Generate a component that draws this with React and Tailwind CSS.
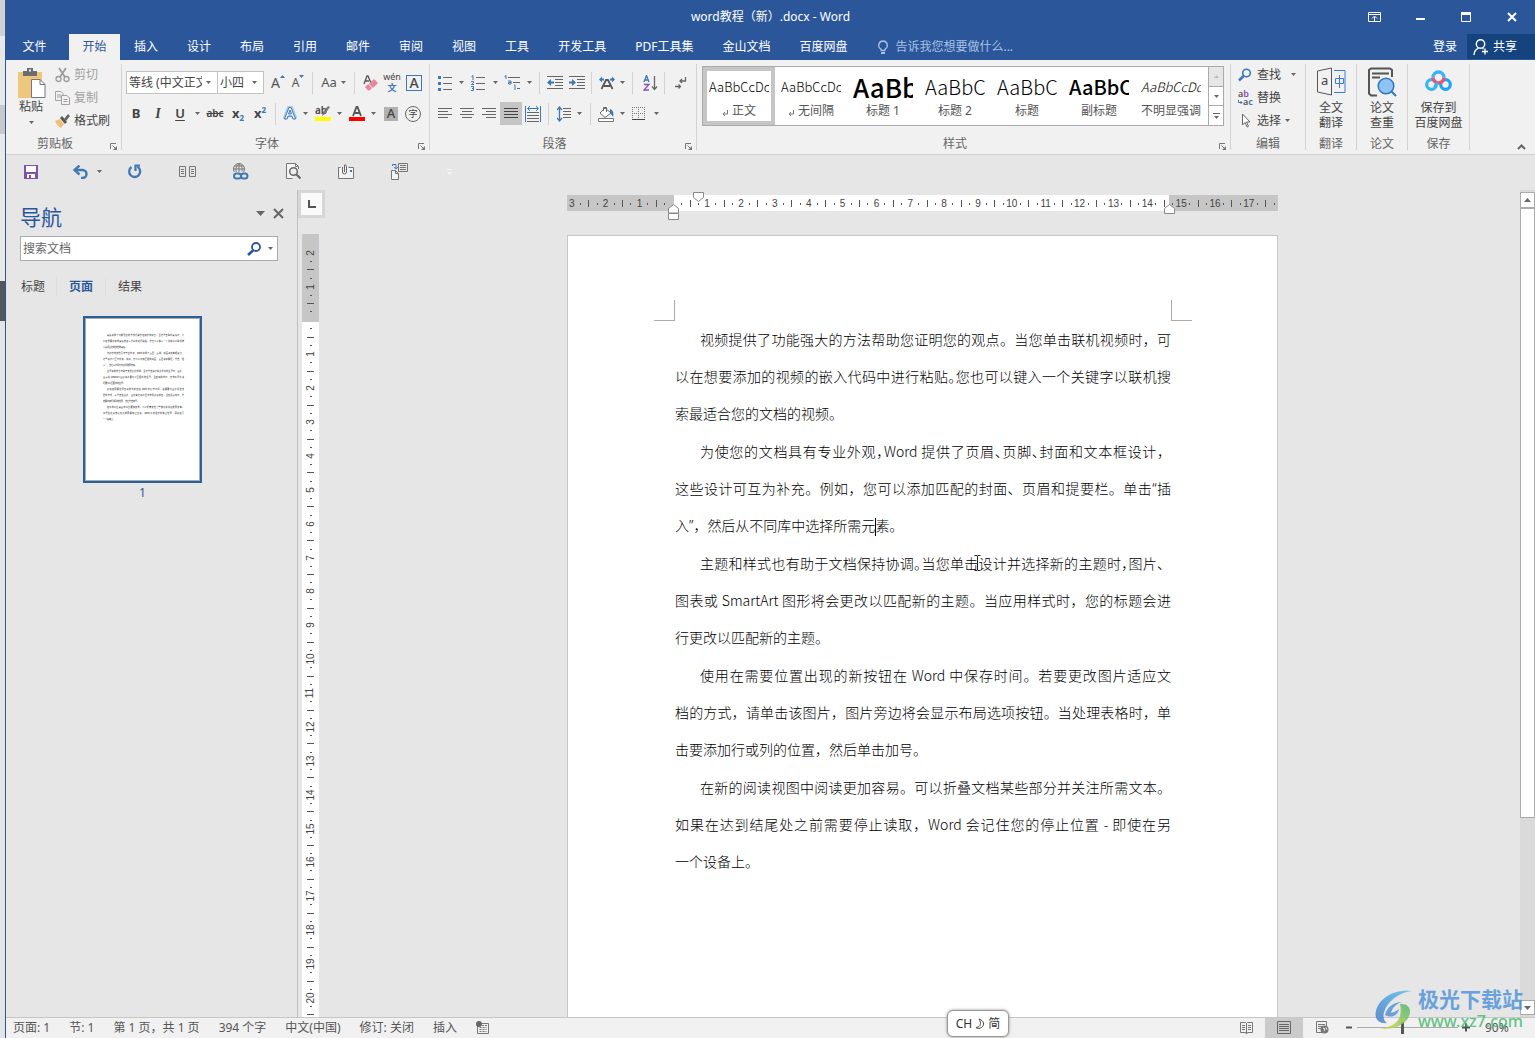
import React from "react";

const UI = "font-['Noto_Sans','Noto_Sans_CJK_SC',sans-serif]";

function Svg({ w = 16, h = 16, children, className = "", label }) {
  return (
    <svg
      width={w}
      height={h}
      viewBox={`0 0 ${w} ${h}`}
      fill="none"
      aria-hidden={label ? undefined : true}
      aria-label={label}
      className={`block shrink-0 ${className}`}
    >
      {children}
    </svg>
  );
}

function Caret({ className = "" }) {
  return (
    <Svg w={5} h={3} className={className}>
      <path d="M0 0h5L2.500 3z" fill="#666" />
    </Svg>
  );
}

function Btn({ w, label, children, className = "" }) {
  return (
    <button
      type="button"
      aria-label={label}
      className={`flex h-[23px] shrink-0 items-center justify-center ${w} ${className}`}
    >
      {children}
    </button>
  );
}

function Drop({ w, label }) {
  return (
    <Btn w={w} label={label}>
      <Caret />
    </Btn>
  );
}

function Sep({ className = "" }) {
  return <span className={`h-[22px] w-px shrink-0 bg-[#d2d2d2] ${className}`} />;
}

function Launcher({ label }) {
  return (
    <button type="button" aria-label={label} className="mb-0.5 self-end">
      <Svg w={7} h={7}>
        <path d="M.5 6V.5H6" stroke="#777" />
        <path d="M2.500 2.500 5 5" stroke="#777" />
        <path d="M7 3v4H3z" fill="#777" />
      </Svg>
    </button>
  );
}

function Group({ name, w, launcher, children }) {
  return (
    <section aria-label={name} className={`flex shrink-0 flex-col ${w}`}>
      <div className="flex h-full">
        <div className="flex min-w-0 flex-1 flex-col">
          <div className="h-[75px]">{children}</div>
          <div className={`flex h-[17px] items-center ${launcher ? "pr-1" : ""}`}>
            <span className={`flex-1 text-center text-xs leading-4 text-[#666] ${launcher ? "pr-1.5" : ""}`}>{name}</span>
            {launcher && <Launcher label={`${name}设置`} />}
          </div>
        </div>
        <span className="my-1 w-px bg-[#d2d2d2]" />
      </div>
    </section>
  );
}

/* ---------- title bar and tabs ---------- */

function TitleBar() {
  const btn = "flex h-[34px] w-[46px] items-center justify-center";
  return (
    <div className="grid h-[34px] grid-cols-[1fr_auto_1fr] items-center text-white">
      <span />
      <h1 className="text-xs">word教程（新）.docx - Word</h1>
      <div className="flex justify-end">
        <button type="button" aria-label="功能区显示选项" className={btn}>
          <Svg w={13} h={10}>
            <path d="M.5.5h12v9H.5zM1 2.500h11" stroke="#fff" />
            <path d="M6.500 9V5M4 6.500 6.500 4 9 6.500" stroke="#fff" />
          </Svg>
        </button>
        <button type="button" aria-label="最小化" className={btn}>
          <Svg w={9} h={10}>
            <path d="M0 6h9v2H0z" fill="#fff" />
          </Svg>
        </button>
        <button type="button" aria-label="最大化" className={btn}>
          <Svg w={10} h={10}>
            <path d="M.5.5h9v9H.5z" stroke="#fff" />
            <path d="M0 0h10v3H0z" fill="#fff" />
          </Svg>
        </button>
        <button type="button" aria-label="关闭" className={btn}>
          <Svg w={10} h={10}>
            <path d="m1 1 8 8M9 1 1 9" stroke="#fff" strokeWidth="2" />
          </Svg>
        </button>
      </div>
    </div>
  );
}

function Tabs() {
  const names = ["插入", "设计", "布局", "引用", "邮件", "审阅", "视图", "工具", "开发工具", "PDF工具集", "金山文档", "百度网盘"];
  return (
    <nav className="flex h-[26px] items-center text-xs text-white">
      <button type="button" className="h-full w-[63px] pr-1.5 text-center">文件</button>
      <button type="button" className="h-full w-[51px] bg-[#f1f1f1] text-[#2b579a]">开始</button>
      <div className="flex gap-px">
        {names.map((n) => (
          <button key={n} type="button" className="h-[26px] shrink-0 px-3.5">{n}</button>
        ))}
      </div>
      <label className="ml-4 flex flex-1 items-center gap-1.5 text-[#a9c1e4]">
        <Svg w={12} h={15}>
          <path d="M6 1a4.300 4.300 0 0 0-2.500 7.800c.5.5.7 1 .7 1.700h3.600c0-.7.2-1.200.7-1.700A4.300 4.300 0 0 0 6 1z" stroke="#a9c1e4" strokeWidth="1.300" />
          <path d="M4 12h4v2H4z" fill="#a9c1e4" />
        </Svg>
        <input
          aria-label="告诉我您想要做什么"
          placeholder="告诉我您想要做什么..."
          className="w-36 bg-transparent text-xs outline-none placeholder:text-[#a9c1e4]"
        />
      </label>
      <button type="button" className="h-full px-2.5">登录</button>
      <button type="button" className="mb-px flex h-[25px] w-[68px] items-center gap-1 bg-[#14437e] pl-1.5">
        <Svg w={16} h={16}>
          <circle cx="7.500" cy="5" r="4.200" stroke="#fff" strokeWidth="1.400" />
          <path d="M1 16c.2-3.500 2-5.800 4.500-6.800M9.500 9.200l1 .6M12 9.500v6M9 12.500h6" stroke="#fff" strokeWidth="1.400" />
        </Svg>
        共享
      </button>
    </nav>
  );
}

/* ---------- ribbon ---------- */

function ClipboardGroup() {
  const row = "flex h-[23px] items-center gap-1 text-xs";
  return (
    <Group name="剪贴板" w="w-[116px]" launcher>
      <div className="flex pl-2.5 pt-[3px]">
        <button type="button" className="flex w-[30px] flex-col items-center pt-1 text-xs text-[#444]">
          <Svg w={30} h={32}>
            <path d="M2 5h24v26H2z" fill="#eec77e" />
            <path d="M7 4h4V1h6v3h4v5H7z" fill="#6d6d6d" />
            <path d="M13 2.500h2v2h-2z" fill="#f1f1f1" />
            <path d="M15.500 12.500h8.500l5 5v13H15.500z" fill="#fff" stroke="#777" />
            <path d="M24 12.500v5h5" stroke="#777" />
          </Svg>
          <span className="leading-4">粘贴</span>
          <Caret className="mt-1.5" />
        </button>
        <div className="ml-[9px]">
          <button type="button" className={`${row} text-[#a0a0a0]`}>
            <Svg w={15} h={16}>
              <path d="m4 1 6 9M11 1 5 10" stroke="#9a9a9a" strokeWidth="1.800" />
              <circle cx="3.500" cy="12" r="2.500" stroke="#9a9a9a" strokeWidth="1.300" />
              <circle cx="11.500" cy="12" r="2.500" stroke="#9a9a9a" strokeWidth="1.300" />
            </Svg>
            剪切
          </button>
          <button type="button" className={`${row} text-[#a0a0a0]`}>
            <Svg w={15} h={14}>
              <path d="M.5.5H6l2 2v7H.5zM2 4h4M2 6h4" stroke="#a6a0a6" />
              <path d="M6.500 4.500H12l2.500 2.500v6.500h-8z" fill="#f1f1f1" stroke="#a6a0a6" />
              <path d="M8.500 8.500h4M8.500 10.500h4" stroke="#a6a0a6" />
            </Svg>
            复制
          </button>
          <button type="button" className={`${row} text-[#444]`}>
            <Svg w={15} h={14}>
              <path d="M0 7l5-2 4 5-3 4C4 13 1 10 0 7z" fill="#eec077" />
              <path d="m5 4 2-2 5 6-2 2z" fill="#555" />
              <path d="m9 5 4-5 2 2-4 5z" fill="#666" />
            </Svg>
            格式刷
          </button>
        </div>
      </div>
    </Group>
  );
}

function Combo({ id, label, value, w }) {
  return (
    <div className={`flex h-[23px] shrink-0 items-center border border-[#c3c3c3] bg-white pr-1.5 ${w}`}>
      <label htmlFor={id} className="sr-only">{label}</label>
      <select id={id} className="h-5 min-w-0 flex-1 appearance-none overflow-hidden bg-transparent pl-0.5 text-xs text-[#444] outline-none">
        <option>{value}</option>
      </select>
      <Caret className="ml-1" />
    </div>
  );
}

function FontGroup() {
  return (
    <Group name="字体" w="w-[308px]" launcher>
      <div className="flex items-center pl-1 pt-[11px]">
        <Combo id="font" label="字体名称" value="等线 (中文正文)" w="w-[92px]" />
        <Combo id="size" label="字号" value="小四" w="w-[47px] -ml-px" />
        <Btn w="w-5 ml-1" label="增大字号">
          <span className="text-sm text-[#555]">A</span>
          <Svg w={5} h={3} className="mb-3"><path d="M2.500 0 5 3H0z" fill="#3c78b4" /></Svg>
        </Btn>
        <Btn w="w-5" label="减小字号">
          <span className="text-xs text-[#555]">A</span>
          <Svg w={5} h={3} className="mb-3"><path d="M2.500 3 5 0H0z" fill="#3c78b4" /></Svg>
        </Btn>
        <Sep className="mx-1" />
        <Btn w="w-[33px]" label="更改大小写" className="gap-1">
          <span className="text-[13px] text-[#555]">Aa</span>
          <Caret />
        </Btn>
        <Sep className="mx-1" />
        <Btn w="w-[22px]" label="清除所有格式">
          <Svg w={15} h={16}>
            <path d="m1 9 3-8h1l3 7M2 6h4" stroke="#555" strokeWidth="1.300" />
            <path d="m6 9 5-5 4 4-5 5z" fill="#e8879b" />
            <path d="m2 12 3-3 4 4-2.500 2.500H5z" fill="#e8879b" />
          </Svg>
        </Btn>
        <Btn w="w-[22px]" label="拼音指南" className="flex-col">
          <span className="text-[9px] leading-[10px] text-[#444]">wén</span>
          <span className="text-[9px] font-bold leading-[11px] text-[#3c78b4]">文</span>
        </Btn>
        <Btn w="w-[22px]" label="字符边框">
          <span className="flex size-4 items-center justify-center border border-[#3c78b4] text-sm font-medium text-[#444]">A</span>
        </Btn>
      </div>
      <div className="flex items-center pl-[3px] pt-2 text-[#444]">
        <Btn w="w-[22px]" label="加粗"><span className="text-[13px] font-bold">B</span></Btn>
        <Btn w="w-[22px]" label="倾斜"><span className="font-['Liberation_Serif',serif] text-sm font-bold italic">I</span></Btn>
        <Btn w="w-[22px]" label="下划线"><span className="text-[13px] font-semibold underline underline-offset-2">U</span></Btn>
        <Drop w="w-3" label="下划线样式" />
        <Btn w="w-6" label="删除线"><span className="text-[10px] font-semibold line-through">abc</span></Btn>
        <Btn w="w-[22px]" label="下标"><span className="text-[13px] font-bold">x</span><span className="pt-2 text-[8px] font-bold text-[#3c78b4]">2</span></Btn>
        <Btn w="w-[22px]" label="上标"><span className="text-[13px] font-bold">x</span><span className="pb-2 text-[8px] font-bold text-[#3c78b4]">2</span></Btn>
        <Sep className="mx-1" />
        <Btn w="w-5" label="文本效果">
          <Svg w={14} h={15}>
            <path d="M1.500 13 6 1.500h2L12.500 13M3.500 9.500h7" stroke="#a9cbee" strokeWidth="4" />
            <path d="M1.500 13 6 1.500h2L12.500 13H10L9 10H5l-1 3zM5.500 8h3L7 4z" stroke="#3c78b4" fill="#fff" />
          </Svg>
        </Btn>
        <Drop w="w-2.5" label="文本效果选项" />
        <Btn w="w-[22px]" label="突出显示" className="ml-0.5">
          <Svg w={16} h={17}>
            <text x="0" y="9" fontSize="10" fontWeight="600" fill="#444" fontFamily="Noto Sans">ab</text>
            <path d="m15 2-5 7-3 2 1-4 5-6z" fill="#777" />
            <path d="M0 12h16v4H0z" fill="#ff0" />
          </Svg>
        </Btn>
        <Drop w="w-2.5" label="突出显示颜色" />
        <Btn w="w-[22px]" label="字体颜色" className="ml-0.5">
          <Svg w={16} h={17}>
            <path d="M4 11 7.500 2h1L12 11M5.500 8h5" stroke="#555" strokeWidth="1.800" />
            <path d="M0 12h16v4H0z" fill="#f00" />
          </Svg>
        </Btn>
        <Drop w="w-2.5" label="字体颜色选项" />
        <Btn w="w-[22px]" label="字符底纹" className="ml-0.5">
          <span className="flex h-3.5 w-3.5 items-center justify-center bg-[#b0b0b0] text-[13px] font-medium">A</span>
        </Btn>
        <Btn w="w-[22px]" label="带圈字符">
          <span className="flex size-4 items-center justify-center rounded-full border border-[#666] text-[9px]">字</span>
        </Btn>
      </div>
    </Group>
  );
}

function Lines({ xs, color = "#666" }) {
  return xs.map(([x1, x2, y], i) => <path key={i} d={`M${x1} ${y}.5H${x2}`} stroke={color} />);
}

function ParagraphGroup() {
  const blue = "#3c78b4";
  return (
    <Group name="段落" w="w-[267px]" launcher>
      <div className="flex items-center pl-1 pt-[11px]">
        <Btn w="w-[22px]" label="项目符号">
          <Svg w={14} h={16}>
            <path d="M0 1h3v3H0zM0 7h3v3H0zM0 13h3v3H0z" fill={blue} />
            <Lines xs={[[5, 14, 2], [5, 14, 8], [5, 14, 14]]} />
          </Svg>
        </Btn>
        <Drop w="w-2.5" label="项目符号库" />
        <Btn w="w-6" label="编号">
          <Svg w={14} h={16}>
            <path d="M.5 1.500 2 .5V5M0 6.500h2.500V8L.5 9.500H3M0 11.500h2.500v4H0M1 13.500h2" stroke={blue} />
            <Lines xs={[[5, 14, 2], [5, 14, 8], [5, 14, 14]]} />
          </Svg>
        </Btn>
        <Drop w="w-2.5" label="编号库" />
        <Btn w="w-6" label="多级列表">
          <Svg w={16} h={16}>
            <path d="M.5 1.500 2 .5V4M4 6h3v3H4.500V7.500H7M10 10h1v5" stroke={blue} />
            <Lines xs={[[4, 16, 2], [9, 16, 7], [13, 16, 13]]} />
          </Svg>
        </Btn>
        <Drop w="w-2.5" label="多级列表库" />
        <Sep className="ml-[5px] mr-1" />
        <Btn w="w-[22px]" label="减少缩进量">
          <Svg w={16} h={14}>
            <Lines xs={[[0, 16, 0], [8, 16, 3], [8, 16, 6], [8, 16, 9], [0, 16, 12]]} />
            <path d="M0 6.500 4 3v2.500h3v2H4V10z" fill={blue} />
          </Svg>
        </Btn>
        <Btn w="w-[22px]" label="增加缩进量">
          <Svg w={16} h={14}>
            <Lines xs={[[0, 16, 0], [8, 16, 3], [8, 16, 6], [8, 16, 9], [0, 16, 12]]} />
            <path d="M7 6.500 3 3v2.500H0v2h3V10z" fill={blue} />
          </Svg>
        </Btn>
        <Sep className="ml-[3px] mr-1" />
        <Btn w="w-[22px]" label="中文版式">
          <Svg w={16} h={14}>
            <path d="M0 3.500 3 .5v2h2v2H3v2zM16 3.500l-3-3v2h-2v2h2v2z" fill={blue} />
            <path d="m2.500 13 4.500-9h2l4.500 9M5 10h6" stroke="#555" strokeWidth="1.800" />
          </Svg>
        </Btn>
        <Drop w="w-2" label="中文版式选项" />
        <Sep className="mx-1.5" />
        <Btn w="w-[22px]" label="排序">
          <Svg w={15} h={16}>
            <path d="M1 7 3.500.5 6 7M2 5h3" stroke={blue} strokeWidth="1.300" />
            <path d="M1 9.500h5L1 15h5" stroke="#8a4fae" strokeWidth="1.300" />
            <path d="M11.500 1v13M9 11.500l2.500 3 2.500-3" stroke="#666" strokeWidth="1.300" />
          </Svg>
        </Btn>
        <Sep className="ml-[3px] mr-1" />
        <Btn w="w-6" label="显示编辑标记">
          <Svg w={12} h={14}>
            <path d="M10.500 1v4H5M7 3 5 5l2 2M0 10.500h5M3.500 8.500l2 2-2 2" stroke="#666" strokeWidth="1.300" />
          </Svg>
        </Btn>
      </div>
      <div className="flex items-center pl-1 pt-2">
        <Btn w="w-[22px]" label="左对齐">
          <Svg w={14} h={11}><Lines xs={[[0, 14, 0], [0, 10, 3], [0, 14, 6], [0, 10, 9]]} /></Svg>
        </Btn>
        <Btn w="w-[22px]" label="居中">
          <Svg w={14} h={11}><Lines xs={[[0, 14, 0], [2, 12, 3], [0, 14, 6], [2, 12, 9]]} /></Svg>
        </Btn>
        <Btn w="w-[22px]" label="右对齐">
          <Svg w={14} h={11}><Lines xs={[[0, 14, 0], [4, 14, 3], [0, 14, 6], [4, 14, 9]]} /></Svg>
        </Btn>
        <Btn w="w-[22px]" label="两端对齐" className="bg-[#c5c5c5]">
          <Svg w={14} h={11}><Lines xs={[[0, 14, 0], [0, 14, 3], [0, 14, 6], [0, 14, 9]]} color="#444" /></Svg>
        </Btn>
        <Btn w="w-[22px]" label="分散对齐">
          <Svg w={16} h={16}>
            <path d="M.5 0v16M15.500 0v16M3 2.500h10M5 0 2.500 2.500 5 5M11 0l2.500 2.500L11 5" stroke={blue} />
            <Lines xs={[[2, 14, 6], [2, 14, 9], [2, 14, 12], [2, 14, 15]]} />
          </Svg>
        </Btn>
        <Sep className="ml-1 mr-[5px]" />
        <Btn w="w-5" label="行和段落间距">
          <Svg w={14} h={16}>
            <path d="M2.500 1v14M0 4l2.500-3L5 4M0 12l2.500 3L5 12" stroke={blue} strokeWidth="1.300" />
            <Lines xs={[[6, 14, 2], [6, 14, 5], [6, 14, 8], [6, 14, 11]]} />
          </Svg>
        </Btn>
        <Drop w="w-2.5" label="行距选项" />
        <Sep className="ml-1.5 mr-1" />
        <Btn w="w-[22px]" label="底纹">
          <Svg w={17} h={16}>
            <path d="m2 7 5-5 6 5-6 4.500z" fill="#fff" stroke="#666" />
            <path d="M5.500 5V1.500h3V6" stroke="#666" />
            <path d="M12 3c3 1 4 4 3 8-1-2-2-3-3-4z" fill={blue} />
            <path d="M.5 12.500h15v3H.5z" fill="#fff" stroke="#777" />
          </Svg>
        </Btn>
        <Drop w="w-2.5" label="底纹颜色" />
        <Btn w="w-6" label="边框">
          <Svg w={14} h={13}>
            <path d="M.5 0v12M6.500 0v12M12.500 0v12M0 .5h13M0 6.500h13" stroke="#777" strokeDasharray="1 1" />
            <path d="M0 12.500h13" stroke="#444" />
          </Svg>
        </Btn>
        <Drop w="w-2.5" label="边框选项" />
      </div>
    </Group>
  );
}

const STYLES = [
  { name: "正文", mark: true, text: "AaBbCcDd", cls: "text-[13px] font-light" },
  { name: "无间隔", mark: true, text: "AaBbCcDd", cls: "text-[13px] font-light" },
  { name: "标题 1", text: "AaBb", cls: "text-[26px] font-medium" },
  { name: "标题 2", text: "AaBbCc", cls: "text-xl font-light" },
  { name: "标题", text: "AaBbCc", cls: "text-xl font-light" },
  { name: "副标题", text: "AaBbCc", cls: "text-xl font-medium" },
  { name: "不明显强调", text: "AaBbCcDd", cls: "text-[13px] font-light italic text-[#404040]" },
];

function StylesGroup() {
  const side = "flex flex-1 items-center justify-center border-l border-[#ababab]";
  return (
    <Group name="样式" w="w-[534px]" launcher>
      <div className="pl-[5px] pt-1.5">
        <div className="flex h-[60px] w-[522px] border border-[#ababab] bg-white">
          {STYLES.map((s, i) => (
            <button
              key={s.name}
              type="button"
              className={`flex w-[72px] shrink-0 flex-col ${i === 0 ? "border-4 border-[#c6c6c6] px-0.5" : "px-1.5 py-1"}`}
            >
              <span className={`flex h-8 w-full items-center overflow-hidden whitespace-nowrap font-['Noto_Sans_CJK_SC',sans-serif] leading-8 text-black ${s.cls}`}>
                {s.text}
              </span>
              <span className="flex w-full items-center justify-center gap-1 whitespace-nowrap text-xs leading-4 text-[#555]">
                {s.mark && (
                  <Svg w={6} h={7} className="mt-1">
                    <path d="M5.500 0v4H1M3 2 1 4l2 2" stroke="#777" />
                  </Svg>
                )}
                {s.name}
              </span>
            </button>
          ))}
          <div className="ml-px flex flex-1 flex-col">
            <button type="button" aria-label="上一行" className={`${side} bg-[#e6e6e6]`}>
              <Svg w={5} h={3}><path d="M2.500 0 5 3H0z" fill="#bbb" /></Svg>
            </button>
            <button type="button" aria-label="下一行" className={`${side} border-t`}><Caret /></button>
            <button type="button" aria-label="其他" className={`${side} flex-col gap-0.5 border-t`}>
              <span className="h-px w-[7px] bg-[#666]" />
              <Caret />
            </button>
          </div>
        </div>
      </div>
    </Group>
  );
}

function EditingGroup() {
  const row = "flex h-[23px] items-center gap-1 text-xs text-[#444]";
  return (
    <Group name="编辑" w="w-[75px]">
      <div className="pl-[7px] pt-[3px]">
        <button type="button" className={row}>
          <Svg w={15} h={14}>
            <circle cx="8.500" cy="5" r="3.800" stroke="#3c78b4" strokeWidth="1.600" />
            <path d="M5.500 8 1 12.500" stroke="#3c78b4" strokeWidth="2.500" />
          </Svg>
          查找
          <Caret className="ml-1.5" />
        </button>
        <button type="button" className={row}>
          <Svg w={16} h={16}>
            <text x="0" y="7" fontSize="9" fontWeight="600" fontFamily="Noto Sans" fill="#555">a<tspan fill="#8a4fae">b</tspan></text>
            <text x="5" y="15" fontSize="9" fontWeight="600" fontFamily="Noto Sans" fill="#555">a<tspan fill="#3c78b4">c</tspan></text>
            <path d="M.5 10v2.500H4M2.500 11 4 12.500 2.500 14" stroke="#3c78b4" />
          </Svg>
          <span className="-ml-px">替换</span>
        </button>
        <button type="button" className={row}>
          <Svg w={15} h={15}>
            <path d="M4.500 1v11l2.500-2.500 2 4.500 1.500-.7L8.500 9H12z" stroke="#666" fill="#fff" />
          </Svg>
          选择
          <Caret />
        </button>
      </div>
    </Group>
  );
}

function BigGroup({ name, w, icon, lines }) {
  return (
    <Group name={name} w={w}>
      <button type="button" className="flex w-full flex-col items-center pt-[7px] text-xs leading-[15px] text-[#444]">
        <span className="mb-0.5 flex h-[31px] items-start">{icon}</span>
        {lines.map((l) => <span key={l} className="whitespace-nowrap">{l}</span>)}
      </button>
    </Group>
  );
}

const translateIcon = (
  <Svg w={29} h={30}>
    <path d="M.5 4 14.500 1v27L.5 25z" stroke="#555" />
    <text x="4" y="18" fontSize="13" fontFamily="Noto Sans" fill="#444">a</text>
    <path d="M17 3.500h11v22H17" stroke="#3f7bd0" />
    <path d="M18.500 11.500h8v5h-8zM22.500 8v13" stroke="#3f7bd0" />
  </Svg>
);
const paperIcon = (
  <Svg w={29} h={30}>
    <path d="M9 28.500H3l-2-2V3l2-1.500h19L24 3v7" stroke="#555" strokeWidth="2" />
    <path d="M4 6.500h17M4 10.500h8" stroke="#555" strokeWidth="2" />
    <circle cx="18" cy="19" r="7.800" fill="#8fc3f8" stroke="#2f78b8" strokeWidth="1.500" />
    <path d="m23 24 5 5" stroke="#2f78b8" strokeWidth="2" />
  </Svg>
);
const cloudIcon = (
  <Svg w={27} h={25} className="mt-0.5">
    <circle cx="6.500" cy="15.500" r="4.800" stroke="#35b5f5" strokeWidth="3.200" />
    <circle cx="20.500" cy="15.500" r="4.800" stroke="#1ba4f5" strokeWidth="3.200" />
    <path d="M8 8.500a5.500 5.500 0 0 1 11 0" stroke="#35b5f5" strokeWidth="3.400" />
    <path d="M8 8.500a5.500 5.500 0 0 0 11 0" stroke="#f0506e" strokeWidth="3.400" />
    <path d="m9.500 18 3-4.500" stroke="#35b5f5" strokeWidth="3" />
  </Svg>
);

function Ribbon() {
  return (
    <div className="flex h-[95px] overflow-hidden border-b border-[#d2d2d2] bg-[#f1f1f1]">
      <ClipboardGroup />
      <FontGroup />
      <ParagraphGroup />
      <StylesGroup />
      <EditingGroup />
      <BigGroup name="翻译" w="w-[51px]" icon={translateIcon} lines={["全文", "翻译"]} />
      <BigGroup name="论文" w="w-[51px]" icon={paperIcon} lines={["论文", "查重"]} />
      <BigGroup name="保存" w="w-[62px]" icon={cloudIcon} lines={["保存到", "百度网盘"]} />
      <div className="flex flex-1 items-end justify-end pb-1 pr-[9px]">
        <button type="button" aria-label="折叠功能区">
          <Svg w={9} h={7}><path d="m1 6 3.500-3.500L8 6" stroke="#666" strokeWidth="2" /></Svg>
        </button>
      </div>
    </div>
  );
}

function QuickAccess() {
  const wide = "w-[53px]";
  return (
    <div className="flex h-[35px] items-center bg-[#e6e6e6] pb-0.5">
      <Btn w="w-[50px]" label="保存">
        <Svg w={14} h={14}>
          <path d="M0 0h14v14H0z" fill="#8250aa" />
          <path d="M2 1h10v6H2zM3 9h8v4H3z" fill="#fff" />
          <path d="M5 10h2v3H5z" fill="#8250aa" />
        </Svg>
      </Btn>
      <Btn w="w-5 ml-[15px]" label="撤消">
        <Svg w={16} h={14}>
          <path d="M2 5h7.500a4 4 0 0 1 0 8H8" stroke="#3f78b5" strokeWidth="2.400" />
          <path d="M6.500.5 1.500 5l5 4.500" stroke="#3f78b5" strokeWidth="2.400" />
        </Svg>
      </Btn>
      <Drop w="w-[17px]" label="撤消列表" />
      <Btn w={wide} label="恢复">
        <Svg w={15} h={15}>
          <path d="M4.500 3A5.500 5.500 0 1 0 10.500 2.800" stroke="#3f78b5" strokeWidth="2.300" />
          <path d="M8.500 7V1.500H13" stroke="#3f78b5" strokeWidth="2.200" />
        </Svg>
      </Btn>
      <Btn w={wide} label="阅读视图">
        <Svg w={17} h={12}>
          <path d="M.5.5h6v10h-6zM10.500.5h6v10h-6zM2 3.500h3M2 5.500h3M2 7.500h3M12 3.500h3M12 5.500h3M12 7.500h3" stroke="#777" />
        </Svg>
      </Btn>
      <Btn w={wide} label="超链接">
        <Svg w={17} h={17}>
          <circle cx="7" cy="6" r="5.500" stroke="#777" />
          <path d="M1.500 6h11M7 .5v9M2.500 3h9M4.500 10C3.500 7 3.500 3.500 7 .5c3.500 3 3.500 5 3 8" stroke="#777" />
          <path d="M1 9h15v8H1z" fill="#e6e6e6" />
          <rect x="2" y="10.500" width="7" height="5" rx="2.500" stroke="#3f78b5" strokeWidth="2" />
          <rect x="9" y="10.500" width="6.500" height="5" rx="2.500" stroke="#3f78b5" strokeWidth="2" />
        </Svg>
      </Btn>
      <Btn w={wide} label="打印预览">
        <Svg w={15} h={17}>
          <path d="M12.500 6V3.500L9.500.5h-9v15h6M9.500.5v3h3" fill="#f4f4f4" stroke="#777" />
          <circle cx="7.500" cy="8.500" r="3.800" stroke="#666" strokeWidth="1.500" fill="#eee" />
          <path d="m10.500 11.500 4 4" stroke="#666" strokeWidth="2.200" />
        </Svg>
      </Btn>
      <Btn w={wide} label="附件">
        <Svg w={17} h={16}>
          <path d="M2.500 3.500H.5v11h15v-11h-5" fill="#f4f4f4" stroke="#777" />
          <path d="M4.500 3v5a2 2 0 0 0 4 0V2.500a1.500 1.500 0 0 0-2-1.500v7" stroke="#666" />
          <path d="M12 6h2v2h-2z" fill="#3f78b5" />
        </Svg>
      </Btn>
      <Btn w={wide} label="发送">
        <Svg w={17} h={17}>
          <path d="M7.500.5h9v8h-9zM9 2.500h6M9 4.500h6M9 6.500h6" stroke="#777" />
          <path d="M.5 7.500h4l3 3v6h-7zM4.500 7.500v3h3" fill="#f4f4f4" stroke="#777" />
          <path d="M1.500 3V1.500h3.500V5.500M3 4l2 2 2-2" stroke="#3f78b5" />
        </Svg>
      </Btn>
      <Btn w="w-[46px]" label="自定义快速访问工具栏">
        <Svg w={5} h={6}>
          <path d="M0 .5h5" stroke="#f6f6f6" />
          <path d="M0 3h5L2.500 6z" fill="#f6f6f6" />
        </Svg>
      </Btn>
    </div>
  );
}

/* ---------- document text ---------- */

const DOC = [
  [
    "视频提供了功能强大的方法帮助您证明您的观点。当您单击联机视频时，可",
    "以在想要添加的视频的嵌入代码中进行粘贴。您也可以键入一个关键字以联机搜",
    "索最适合您的文档的视频。",
  ],
  [
    "为使您的文档具有专业外观，Word 提供了页眉、页脚、封面和文本框设计，",
    "这些设计可互为补充。例如，您可以添加匹配的封面、页眉和提要栏。单击“插",
    "入”，然后从不同库中选择所需元|素。",
  ],
  [
    "主题和样式也有助于文档保持协调。当您单击^设计并选择新的主题时，图片、",
    "图表或 SmartArt 图形将会更改以匹配新的主题。当应用样式时，您的标题会进",
    "行更改以匹配新的主题。",
  ],
  [
    "使用在需要位置出现的新按钮在 Word 中保存时间。若要更改图片适应文",
    "档的方式，请单击该图片，图片旁边将会显示布局选项按钮。当处理表格时，单",
    "击要添加行或列的位置，然后单击加号。",
  ],
  [
    "在新的阅读视图中阅读更加容易。可以折叠文档某些部分并关注所需文本。",
    "如果在达到结尾处之前需要停止读取，Word 会记住您的停止位置 - 即使在另",
    "一个设备上。",
  ],
];

/* lines whose inner punctuation is set half-width so that they fit the measure */
const TIGHT = new Set(["0-1", "1-0", "2-0"]);

function DocLine({ text, tight }) {
  return text.split(/([|^“”]|[，。、](?=.))/).map((part, i) => {
    if (part === "|") {
      return <span key={i} className="-mr-px inline-block h-[18px] w-px bg-black align-middle" />;
    }
    if (part === "^") {
      return (
        <span key={i} className="relative">
          <Svg w={7} h={16} className="absolute -left-1 top-0.5">
            <path d="M.5.5H3l.5.5.5-.5h2.500M3.500 1v14M.5 15.500H3l.5-.5.5.5h2.500" stroke="#222" />
          </Svg>
        </span>
      );
    }
    if (part === "“" || part === "”") {
      return <span key={i} className="font-['Noto_Sans',sans-serif]">{part}</span>;
    }
    if (tight && /^[，。、]$/.test(part)) {
      return <span key={i} className="[font-feature-settings:'halt']">{part}</span>;
    }
    return part;
  });
}

function DocumentText() {
  return DOC.map((lines, p) => (
    <p key={p} className="mb-px">
      {lines.map((line, i) => (
        <span
          key={i}
          className={[
            "block whitespace-nowrap",
            i === 0 ? "pl-[25px]" : "",
            i < lines.length - 1 ? "[text-align-last:justify]" : "",
          ].join(" ")}
        >
          <DocLine text={line} tight={TIGHT.has(`${p}-${i}`)} />
        </span>
      ))}
    </p>
  ));
}

/* ---------- navigation pane ---------- */

function NavPane() {
  return (
    <aside className="flex w-[292px] shrink-0 flex-col border-r border-[#bfbfbf] pl-3.5 pr-[19px]">
      <div className="flex h-[46px] items-center">
        <h2 className="flex-1 pt-2 text-[21px] leading-8 text-[#2b579a]">导航</h2>
        <button type="button" aria-label="任务窗格选项" className="mr-2">
          <Svg w={9} h={5}><path d="M0 0h9L4.500 5z" fill="#666" /></Svg>
        </button>
        <button type="button" aria-label="关闭导航" className="-mr-1.5">
          <Svg w={11} h={11}><path d="m1 1 9 9M10 1l-9 9" stroke="#666" strokeWidth="2" /></Svg>
        </button>
      </div>
      <div className="flex h-[25px] items-center border border-[#ababab] bg-white pr-1">
        <input aria-label="搜索文档" placeholder="搜索文档" className="min-w-0 flex-1 bg-transparent pl-0.5 text-xs outline-none placeholder:text-[#666]" />
        <button type="button" aria-label="搜索">
          <Svg w={15} h={14}>
            <circle cx="9" cy="5" r="4" stroke="#2b579a" strokeWidth="1.800" />
            <path d="M6 8.500 1 13" stroke="#2b579a" strokeWidth="2.600" />
          </Svg>
        </button>
        <button type="button" aria-label="搜索选项" className="ml-1.5"><Caret /></button>
      </div>
      <div className="mt-4 flex h-5 items-center text-xs text-[#444]">
        <button type="button" className="pl-px pr-[11px]">标题</button>
        <span className="h-5 w-px bg-[#dedede]" />
        <button type="button" className="px-3 font-bold text-[#2b579a]">页面</button>
        <span className="h-5 w-px bg-[#dedede]" />
        <button type="button" className="px-3">结果</button>
      </div>
      <button type="button" aria-label="第 1 页" className="ml-[63px] mt-[19px] flex w-[119px] flex-col items-center text-[#2b579a]">
        <span className="block h-[167px] w-full border-2 border-[#2a6099] bg-white">
          <span className="block h-full border border-[#ababab] pl-[17px] pr-[15px] pt-3.5">
            {DOC.map((lines, p) => (
              <span key={p} className="block font-['Noto_Sans_CJK_SC',sans-serif] text-[2px] leading-[6px] text-black">
                {lines.map((l, i) => (
                  <span
                    key={i}
                    className={`block whitespace-nowrap text-left ${i === 0 ? "pl-1" : ""} ${i < 2 ? "[text-align-last:justify]" : ""}`}
                  >
                    {l.replace(/[|^]/, "")}
                  </span>
                ))}
              </span>
            ))}
          </span>
        </span>
        <span className="mt-0.5 text-xs leading-4">1</span>
      </button>
    </aside>
  );
}

/* ---------- rulers ---------- */

const H_MARKS = [3, 2, 1, "", 1, 2, 3, 4, 5, 6, 7, 8, 9, 10, 11, 12, 13, 14, 15, 16, 17, 18];
const V_MARKS = [2, 1, "", 1, 2, 3, 4, 5, 6, 7, 8, 9, 10, 11, 12, 13, 14, 15, 16, 17, 18, 19, 20];

function HRuler() {
  return (
    <div className="relative h-4">
      <div className="h-4 overflow-hidden bg-[linear-gradient(to_right,#c6c6c6_107px,#fff_107px,#fff_602px,#c6c6c6_602px)]">
        <div className="-ml-2 flex h-4 w-[745px] pt-px font-['Liberation_Sans',sans-serif] text-[10px] leading-none text-[#444]">
          {H_MARKS.map((n, i) => (
            <span key={i} className="grid flex-1 grid-cols-4 items-center justify-items-center">
              <span className="h-0.5 w-px bg-[#555]" />
              <span className="flex w-0 justify-center">{n}</span>
              <span className="h-0.5 w-px bg-[#555]" />
              <span className="h-[7px] w-px bg-[#555]" />
            </span>
          ))}
        </div>
      </div>
      <Svg w={11} h={16} className="absolute left-[101px] top-[9px]">
        <path d="M.5 9V4.500L5.500.5l5 4V9zM.5 9.500h10v6H.5z" fill="#fff" stroke="#888" />
      </Svg>
      <Svg w={11} h={10} className="absolute -top-[3px] left-[126px]">
        <path d="M.5.5h10v5l-5 4-5-4z" fill="#fff" stroke="#888" />
      </Svg>
      <Svg w={11} h={10} className="absolute left-[597px] top-[9px]">
        <path d="M.5 9.500v-5L5.500.5l5 4v5z" fill="#fff" stroke="#888" />
      </Svg>
    </div>
  );
}

function VRuler() {
  return (
    <div className="ml-1 mt-4 flex min-h-0 w-[17px] flex-1 flex-col overflow-hidden bg-[linear-gradient(to_bottom,#c6c6c6_88px,#fff_88px)] pt-1.5">
      <div className="-mb-0.5 flex min-h-0 flex-1 flex-col font-['Liberation_Sans',sans-serif] text-[10px] leading-none text-[#444]">
        {V_MARKS.map((n, i) => (
          <span key={i} className="grid min-h-0 flex-1 grid-rows-4 items-center justify-items-center">
            <span className={`h-px w-0.5 ${i === 0 ? "" : "bg-[#555]"}`} />
            <span className="flex h-0 -rotate-90 items-center">{n}</span>
            <span className="h-px w-0.5 bg-[#555]" />
            <span className="h-px w-[7px] bg-[#555]" />
          </span>
        ))}
      </div>
    </div>
  );
}

function Workspace() {
  return (
    <main className="flex min-h-0 flex-1 bg-[#e6e6e6]">
      <NavPane />
      <div className="flex w-[27px] shrink-0 flex-col">
        <button type="button" aria-label="制表符" className="flex h-7 shrink-0 items-center justify-center border-[3px] border-[#d6d6d6] bg-[#fafafa]">
          <Svg w={8} h={8}><path d="M1 0v7h7" stroke="#555" strokeWidth="2" /></Svg>
        </button>
        <VRuler />
      </div>
      <div className="flex min-w-0 flex-1 flex-col items-center overflow-hidden pt-[5px]">
        <div className="flex min-h-0 w-[711px] flex-1 flex-col">
          <HRuler />
          <article className="mt-6 min-h-0 flex-1 overflow-hidden border border-b-0 border-[#c6c6c6] bg-white pt-16 font-['Noto_Sans_CJK_SC',sans-serif] text-sm font-light leading-[37px] text-black">
            <div className="flex justify-between pl-[86px] pr-[85px]">
              <span className="size-[21px] border-b border-r border-[#ababab]" />
              <span className="size-[21px] border-b border-l border-[#ababab]" />
            </div>
            <div className="pl-[107px] pr-[106px]">
              <DocumentText />
            </div>
          </article>
        </div>
      </div>
      <div className="flex w-[15px] shrink-0 flex-col bg-[#dadada] pt-0.5">
        <button type="button" aria-label="向上滚动" className="flex h-4 items-center justify-center border border-[#ababab] bg-white">
          <Svg w={7} h={4}><path d="M3.500 0 7 4H0z" fill="#666" /></Svg>
        </button>
        <div className="flex flex-1 flex-col">
          <div className="h-[77%] border border-[#ababab] bg-white" />
        </div>
        <button type="button" aria-label="向下滚动" className="mb-0.5 flex h-[15px] items-center justify-center border border-[#ababab] bg-white">
          <Svg w={7} h={4}><path d="M3.500 4 7 0H0z" fill="#666" /></Svg>
        </button>
      </div>
    </main>
  );
}

function StatusBar() {
  return (
    <footer className="flex h-[21px] shrink-0 items-center border-t border-[#c6c6c6] bg-[#f1f1f1] pb-px text-xs text-[#555]">
      <div className="flex flex-1 items-center gap-[19px] whitespace-nowrap pl-[7px]">
        <span>页面: 1</span>
        <span>节: 1</span>
        <span>第 1 页，共 1 页</span>
        <span>394 个字</span>
        <span>中文(中国)</span>
        <span>修订: 关闭</span>
        <span>插入</span>
        <button type="button" aria-label="录制宏">
          <Svg w={13} h={13}>
            <path d="M1.500 4v8.500h11v-10H6" stroke="#777" />
            <circle cx="3" cy="3" r="3" fill="#666" />
            <path d="M3.500 6.500h7M3.500 8.500h7M3.500 10.500h7M6 4.500h6" stroke="#777" strokeDasharray="2 1" />
          </Svg>
        </button>
      </div>
      <Btn w="w-[38px]" label="阅读视图">
        <Svg w={13} h={14}>
          <path d="M.5 1.500h5l1 1 1-1h5v10h-5l-1 1.500-1-1.500h-5zM6.500 2v11M2 4.500h3M2 6.500h3M2 8.500h3M8 4.500h3M8 6.500h3M8 8.500h3" stroke="#777" />
        </Svg>
      </Btn>
      <Btn w="w-[38px]" label="页面视图" className="!h-5 bg-[#cbcbcb]">
        <Svg w={14} h={13}>
          <path d="M.5.5h13v12H.5zM2 3.500h10M2 5.500h10M2 7.500h10M2 9.500h10" stroke="#666" />
        </Svg>
      </Btn>
      <Btn w="w-[38px]" label="Web 版式视图">
        <Svg w={13} h={13}>
          <path d="M6 11.500H.5V.5h10V5M2 3.500h7M2 5.500h5M2 7.500h3" stroke="#777" />
          <circle cx="8.500" cy="8.500" r="4" fill="#777" />
          <path d="m7 7 2 1-1 2M10 6.500l1 2" stroke="#f1f1f1" />
        </Svg>
      </Btn>
      <button type="button" aria-label="缩小" className="ml-[5px]"><Svg w={7} h={7}><path d="M0 3.500h6" stroke="#555" strokeWidth="2" /></Svg></button>
      <input
        type="range"
        aria-label="显示比例"
        min="10"
        max="190"
        defaultValue="90"
        className="mx-1 h-3 w-[101px] appearance-none bg-[linear-gradient(#aaa,#aaa)] bg-[length:100%_1px] bg-center bg-no-repeat [&::-webkit-slider-thumb]:h-3 [&::-webkit-slider-thumb]:w-[3px] [&::-webkit-slider-thumb]:appearance-none [&::-webkit-slider-thumb]:bg-[#555]"
      />
      <button type="button" aria-label="放大"><Svg w={9} h={9}><path d="M0 4.500h8M4 .5v8" stroke="#555" strokeWidth="2" /></Svg></button>
      <span className="ml-3.5 mr-6 w-[26px]">90%</span>
    </footer>
  );
}

function ImeBar() {
  return (
    <div className="absolute bottom-px left-[947px] flex h-[27px] w-[62px] items-center justify-center gap-0.5 rounded-md border border-[#999] bg-white text-xs text-[#333] shadow-[0_0_3px_#888]">
      CH
      <Svg w={12} h={12}>
        <path d="M5 1c5 1.500 6 6 2.500 8.500C5.500 11 3 10.500 2 9.500 7 9 7.500 5 5 1z" stroke="#444" />
      </Svg>
      简
    </div>
  );
}

function Watermark() {
  return (
    <div className="pointer-events-none absolute bottom-0 right-3 flex h-[51px] items-start opacity-80">
      <Svg w={44} h={42} className="mt-0.5">
        <defs>
          <linearGradient id="wmBlue" x1="0" y1="1" x2="1" y2="0">
            <stop offset="0" stopColor="#3f78c8" />
            <stop offset="1" stopColor="#55bdee" />
          </linearGradient>
          <linearGradient id="wmGreen" x1="1" y1="0" x2="0" y2="1">
            <stop offset="0" stopColor="#3db36b" />
            <stop offset="1" stopColor="#e8dc3c" />
          </linearGradient>
        </defs>
        <path d="M38 2C20 0 5 9 2 22c-2 8 3 13 11 12-6-4-4-14 4-22C22 7 29 3 38 2z" fill="url(#wmBlue)" />
        <path d="M11 26c2-8 9-13 17-13-6 2-10 6-11 11 3-1 6-2 8-4-1 6-7 10-14 6z" fill="#4a8fd6" />
        <path d="M26 15c8-1 12 5 9 12-3 8-13 14-29 13 11-2 18-6 20-13 1-4 1-8 0-12z" fill="url(#wmGreen)" />
      </Svg>
      <div className="flex flex-col items-start">
        <span className="text-[21px] font-bold leading-6 text-[#4a90d9]">极光下载站</span>
        <span className="text-base font-medium leading-5 text-[#3fb86b]">www.xz7.com</span>
      </div>
    </div>
  );
}

export default function App() {
  return (
    <div className={`relative flex h-screen w-full overflow-hidden ${UI}`}>
      <div className="w-[5px] shrink-0 bg-[linear-gradient(to_bottom,#d0d0d0_36px,#e9e9e9_36px,#e9e9e9_105px,#c8c8c8_105px,#c8c8c8_134px,#e9e9e9_134px,#e9e9e9_281px,#55565c_281px,#55565c_321px,#e4e4e4_321px)]" />
      <div className="flex min-w-0 flex-1 flex-col border-l border-[#2b579a]">
        <header className="shrink-0 bg-[#2b579a]">
          <TitleBar />
          <Tabs />
          <Ribbon />
          <QuickAccess />
        </header>
        <Workspace />
        <StatusBar />
      </div>
      <ImeBar />
      <Watermark />
    </div>
  );
}
